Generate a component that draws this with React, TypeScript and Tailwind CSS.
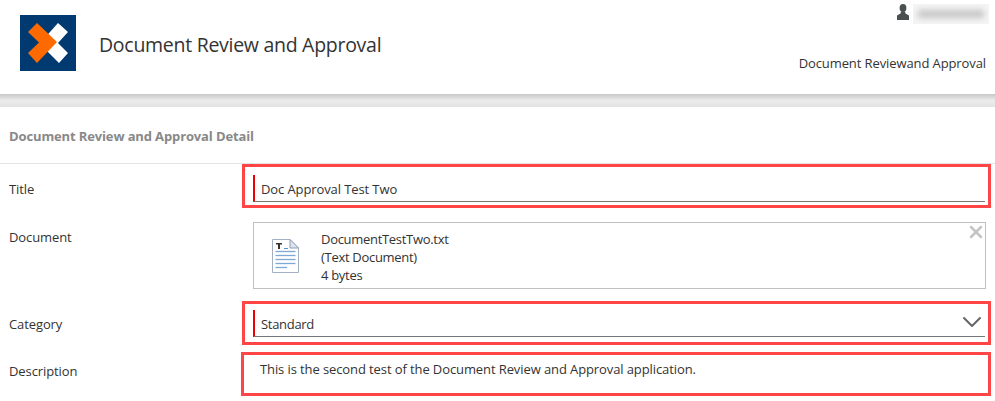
import { ChevronDown, X } from "lucide-react";

function Logo() {
  return (
    <svg width="56" height="56" viewBox="0 0 56 56" className="shrink-0">
      <rect width="56" height="56" fill="#003a70" />
      <polygon points="38,8 48,17 38,28 48,38 39,48 28,37 20,28 30,17" fill="#ffffff" />
      <polygon points="17,8 37,27 17,48 8,38 19,27.5 8,17" fill="#ff6a00" />
    </svg>
  );
}

function DocIcon() {
  return (
    <svg width="27" height="34" viewBox="0 0 27 34">
      <path d="M0.5 0.5H18L26.5 9V33.5H0.5Z" fill="#fff" stroke="#a3afc2" />
      <path d="M18 0.5V9H26.5Z" fill="#dfe5ee" stroke="#8e9db5" />
      <path d="M4 4H10V5.5H8V10H6V5.5H4Z" fill="#333" />
      <path d="M12 9.5H16" stroke="#5b93c9" />
      <g stroke="#7fa8d4" strokeWidth="1.3">
        <path d="M3.5 12.5H23.5" />
        <path d="M3.5 16.5H23.5" />
        <path d="M3.5 20.5H23.5" />
        <path d="M3.5 24.5H23.5" />
        <path d="M3.5 28.5H15" />
      </g>
    </svg>
  );
}

function PersonIcon() {
  return (
    <svg width="12" height="16" viewBox="0 0 12 16" className="shrink-0">
      <ellipse cx="6" cy="4" rx="3.4" ry="4" fill="#4a5050" />
      <path d="M4 7.5H8L8.5 9.5L12 11.5V16H0V11.5L3.5 9.5Z" fill="#4a5050" />
    </svg>
  );
}

export default function App() {
  return (
    <div className="w-[995px] h-[401px] overflow-hidden bg-white font-['Open_Sans','Noto_Sans',sans-serif] text-[13px] text-[#333] tracking-[-0.1px]">
      <header className="h-[94px] flex justify-between">
        <div className="flex items-start pl-5 pt-[15px]">
          <Logo />
          <h1 className="ml-[23px] mt-[16px] text-[19.5px] leading-[28px] tracking-[-0.28px] font-normal text-[#333]">
            Document Review and Approval
          </h1>
        </div>
        <div className="flex flex-col items-end pr-[6px] pt-1">
          <div className="flex items-start gap-1">
            <PersonIcon />
            <div className="w-[76px] h-5 bg-[#f5f5f5] flex items-center justify-center overflow-hidden">
              <div className="w-[66px] h-[8px] bg-[#c4c4c4] blur-[3px]" />
            </div>
          </div>
          <div className="mt-[28px] mr-[3px] leading-[22px]">Document Reviewand Approval</div>
        </div>
      </header>
      <div className="h-[13px] bg-gradient-to-b from-[#c8c8c8] via-[#ececec] to-[#e2e2e2]" />
      <h2 className="h-[57px] pl-[9px] pt-[19px] leading-[20px] font-bold text-[#888] border-b border-[#e4e4e4] tracking-[-0.13px]">
        Document Review and Approval Detail
      </h2>

      <div className="grid grid-cols-[242px_749px] items-start">
        <div className="pl-[9px] pt-[15px] leading-[20px]">Title</div>
        <div className="h-[44px] border-[3px] border-[#ff4545] pl-2 pr-[3px] pt-2">
          <div className="h-[27px] border-l-2 border-l-[#f00000] border-b border-b-[#777] pl-[6px] pt-[4px] leading-[20px]">
            Doc Approval Test Two
          </div>
        </div>

        <div className="pl-[9px] pt-[19px] leading-[20px]">Document</div>
        <div className="pt-[14px] pl-[11px] pr-[5px]">
          <div className="relative h-[67px] border border-[#c0c0c0] flex items-center pl-[18px] gap-[22px]">
            <DocIcon />
            <div className="pt-[3px] leading-[18px] tracking-[-0.3px]">
              <div>DocumentTestTwo.txt</div>
              <div>(Text Document)</div>
              <div>4 bytes</div>
            </div>
            <X size={20} strokeWidth={3} className="absolute -right-px -top-px text-[#c4c4c4]" />
          </div>
        </div>

        <div className="pl-[9px] pt-[25px] leading-[20px]">Category</div>
        <div className="mt-[12px] h-[44px] border-[3px] border-[#ff4545] pl-2 pr-[3px] pt-[6px]">
          <div className="h-[27px] border-l-2 border-l-[#f00000] border-b border-b-[#777] pl-[6px] pt-[4px] leading-[20px] flex items-start justify-between">
            <span className="tracking-[-0.3px]">Standard</span>
            <ChevronDown size={32} strokeWidth={1.5} className="text-[#666] -mt-[8px] -mr-[3px]" />
          </div>
        </div>

        <div className="pl-[9px] pt-[16px] leading-[20px]">Description</div>
        <div className="mt-[7px] -ml-px h-[44px] border-[3px] border-[#ff4545] pl-[16px] pt-[4px] leading-[20px]">
          This is the second test of the Document Review and Approval application.
        </div>
      </div>
    </div>
  );
}
